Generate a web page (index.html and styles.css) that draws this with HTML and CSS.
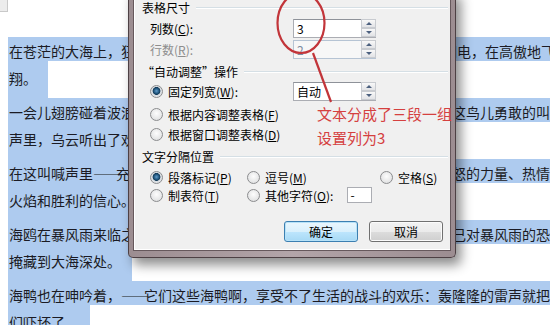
FILE: index.html
```html
<!DOCTYPE html>
<html lang="zh-CN">
<head>
    <meta charset="UTF-8">
    <meta name="viewport" content="width=device-width, initial-scale=1.0">
    <title>将文字转换成表格</title>
    <link rel="stylesheet" href="styles.css">
</head>
<body>
    <!-- document behind the dialog -->
    <div class="page">
        <div class="corner"></div>

        <div class="para">
            <div class="line">在苍茫的大海上，狂风卷集着乌云。在乌云和大海之间，海燕像黑色的闪电，在高傲地飞</div>
            <span class="tail">翔。</span>
        </div>
        <div class="para">
            <div class="line">一会儿翅膀碰着波浪，一会儿箭一般地直冲向乌云，它叫喊着，<span class="dash">——</span>就在这鸟儿勇敢的叫喊</div>
            <span class="tail">声里，乌云听出了欢乐。</span>
        </div>
        <div class="para">
            <div class="line">在这叫喊声里<span class="dash">——</span>充满着对暴风雨的渴望！在这叫喊声里，乌云听出了愤怒的力量、热情的</div>
            <span class="tail">火焰和胜利的信心。</span>
        </div>
        <div class="para">
            <div class="line">海鸥在暴风雨来临之前呻吟着，<span class="dash">——</span>呻吟着，它们在大海上飞窜，想把自己对暴风雨的恐惧</div>
            <span class="tail">掩藏到大海深处。</span>
        </div>
        <div class="para">
            <div class="line">海鸭也在呻吟着，<span class="dash">——</span>它们这些海鸭啊，享受不了生活的战斗的欢乐：轰隆隆的雷声就把它</div>
            <span class="tail">们吓坏了。</span>
        </div>
    </div>

    <!-- convert text to table dialog -->
    <div class="dialog">
        <div class="panel">
            <div class="group"><span>表格尺寸</span></div>
            <div class="field f-cols">
                <label class="lbl">列数(<u>C</u>):</label>
                <div class="spin"><span class="val">3</span><span class="btns"><i class="up"></i><i class="down"></i></span></div>
            </div>
            <div class="field f-rows off">
                <label class="lbl">行数(<u>R</u>):</label>
                <div class="spin"><span class="val">2</span><span class="btns"><i class="up"></i><i class="down"></i></span></div>
            </div>

            <div class="group g-fit"><span>“自动调整”操作</span></div>
            <div class="field f-fixed">
                <label class="opt lbl"><i class="radio on"></i>固定列宽(<u>W</u>):</label>
                <div class="spin"><span class="val">自动</span><span class="btns"><i class="up"></i><i class="down"></i></span></div>
            </div>
            <div class="field f-content">
                <label class="opt"><i class="radio"></i>根据内容调整表格(<u>F</u>)</label>
            </div>
            <div class="field f-window">
                <label class="opt"><i class="radio"></i>根据窗口调整表格(<u>D</u>)</label>
            </div>

            <div class="group g-sep"><span>文字分隔位置</span></div>
            <div class="seps s-one">
                <label class="opt"><i class="radio on"></i>段落标记(<u>P</u>)</label>
                <label class="opt"><i class="radio"></i>逗号(<u>M</u>)</label>
                <label class="opt"><i class="radio"></i>空格(<u>S</u>)</label>
            </div>
            <div class="seps s-two">
                <label class="opt"><i class="radio"></i>制表符(<u>T</u>)</label>
                <label class="opt"><i class="radio"></i>其他字符(<u>O</u>):<span class="other">-</span></label>
            </div>

            <div class="actions">
                <button class="btn default">确定</button>
                <button class="btn">取消</button>
            </div>
        </div>
    </div>

    <!-- red annotation drawn over the screenshot -->
    <svg class="marks" width="550" height="325" viewBox="0 0 550 325">
        <ellipse cx="301" cy="23" rx="23.5" ry="30" fill="none" stroke="#c2353a" stroke-width="2.2"/>
        <line x1="313" y1="53" x2="331" y2="102" stroke="#c2353a" stroke-width="2.2"/>
    </svg>
    <div class="note">
        <p>文本分成了三段一组</p>
        <p>设置列为3</p>
    </div>
</body>
</html>
```

FILE: styles.css
```css
body {
    margin: 0;
    width: 550px;
    height: 325px;
    overflow: hidden;
    background: #fff;
    font-family: "Noto Sans CJK SC", "Liberation Sans", sans-serif;
    position: relative;
}

/* ---------- document ---------- */
.page {
    padding-left: 8px;
    color: #1b1b24;
    font-size: 14px;
}

.corner {
    width: 7px;
    height: 11px;
    margin-left: -8px;
    margin-bottom: 25px;
    background: #ececec;
    border-right: 1px solid #c9c9c9;
    border-bottom: 1px solid #c9c9c9;
}

.para {
    display: flex;
    flex-direction: column;
    align-items: flex-start;
}

.line {
    align-self: stretch;
    height: 20px;
    padding: 4px 0 0 1px;
    line-height: 20px;
    white-space: nowrap;
    overflow: hidden;
    background: #aecbef;
}

.tail {
    padding: 7px 11px 10px 1px;
    line-height: 20px;
    white-space: nowrap;
    background: #aecbef;
}

.dash {
    letter-spacing: -5px;
}

/* ---------- dialog ---------- */
.dialog {
    position: absolute;
    left: 128px;
    top: -10px;
    width: 318px;
    height: 260px;
    padding: 0 4px 7px 4px;
    background: linear-gradient(90deg, #9c8d91, #b3a5a9 50%, #9c8d91);
    border: 1px solid #4d4044;
    border-top: none;
    border-radius: 0 0 5px 5px;
    box-shadow: 5px 7px 12px rgba(0, 0, 0, 0.45);
    font-size: 12px;
    color: #000;
}

.panel {
    height: 250px;
    padding: 10px 2px 0 8px;
    background: #f0f0f0;
    border: 1px solid #66585c;
    border-top: none;
    box-shadow: inset 1px -1px 0 #fff;
    display: flex;
    flex-direction: column;
}

.group {
    display: flex;
    align-items: center;
    height: 16px;
    line-height: 16px;
}

.group::after {
    content: "";
    flex: 1;
    margin-left: 6px;
    border-top: 1px solid #d5dfe5;
    border-bottom: 1px solid #fff;
}

.g-fit { margin-top: 5px; }
.g-sep { margin-top: 7px; }

.field {
    display: flex;
    align-items: center;
    padding-left: 8px;
    height: 20px;
}

.f-cols { margin-top: 2px; }
.f-rows { margin-top: 1px; }
.f-fixed { margin-top: 2px; height: 19px; }
.f-content { margin-top: 5px; height: 16px; }
.f-window { margin-top: 4px; height: 16px; }

.lbl {
    width: 143px;
}

.off .lbl {
    color: #8d8d8d;
}

.opt {
    display: flex;
    align-items: center;
    white-space: nowrap;
}

.radio {
    width: 11px;
    height: 11px;
    margin-right: 5px;
    border: 1px solid #8b8c8e;
    border-radius: 50%;
    background: radial-gradient(circle at 50% 40%, #fdfdfd, #d9dadb);
    flex-shrink: 0;
}

.radio.on {
    background: radial-gradient(circle at 50% 45%, #5f9bc9 0, #22577f 2.5px, #123a58 3.6px, #d6dbe0 4.2px, #f4f4f4 100%);
}

.spin {
    display: flex;
    width: 81px;
    height: 17px;
    border: 1px solid #abadb3;
    border-top-color: #8e9299;
    background: #fff;
}

.off .spin {
    border-color: #b6c4d4;
    background: #f7f7f7;
    color: #7d8ca0;
}

.val {
    flex: 1;
    padding-left: 3px;
    line-height: 17px;
}

.btns {
    width: 14px;
    display: flex;
    flex-direction: column;
}

.btns i {
    flex: 1;
    display: flex;
    align-items: center;
    justify-content: center;
    border: 1px solid #c8cbd0;
    background: linear-gradient(#f8f8f8, #e2e3e6);
    margin: -1px -1px 0 0;
}

.btns i + i {
    margin-top: 0;
}

.up::after,
.down::after {
    content: "";
    border-left: 3px solid transparent;
    border-right: 3px solid transparent;
}

.up::after { border-bottom: 3px solid #4c607f; }
.down::after { border-top: 3px solid #4c607f; }

.seps {
    display: grid;
    grid-template-columns: 97px 133px auto;
    align-items: center;
    padding-left: 8px;
}

.s-one { margin-top: 4px; height: 16px; }
.s-two { margin-top: 1px; height: 18px; }

.other {
    display: inline-block;
    width: 21px;
    height: 14px;
    margin-left: 14px;
    padding-left: 2px;
    line-height: 14px;
    border: 1px solid #abadb3;
    background: #fff;
}

.actions {
    display: flex;
    justify-content: flex-end;
    gap: 11px;
    margin-top: 17px;
    margin-right: 5px;
}

.btn {
    width: 74px;
    height: 21px;
    padding: 0;
    font: inherit;
    color: #000;
    border: 1px solid #707070;
    border-radius: 3px;
    background: linear-gradient(#f2f2f2 0, #ebebeb 50%, #dddddd 50%, #cfcfcf 100%);
    box-shadow: inset 0 0 0 1px #fbfbfb;
}

.btn.default {
    border-color: #3c7fb1;
    background: linear-gradient(#eaf6fd 0, #d9f0fc 50%, #bee6fd 50%, #a7d9f5 100%);
    box-shadow: inset 0 0 0 1px #b7e2f8;
}

/* ---------- annotation ---------- */
.marks {
    position: absolute;
    left: 0;
    top: 0;
    pointer-events: none;
}

.note {
    position: absolute;
    left: 317px;
    top: 102px;
    color: #d5403f;
    font-size: 15px;
    line-height: 24px;
}

.note p {
    margin: 0;
}
```
